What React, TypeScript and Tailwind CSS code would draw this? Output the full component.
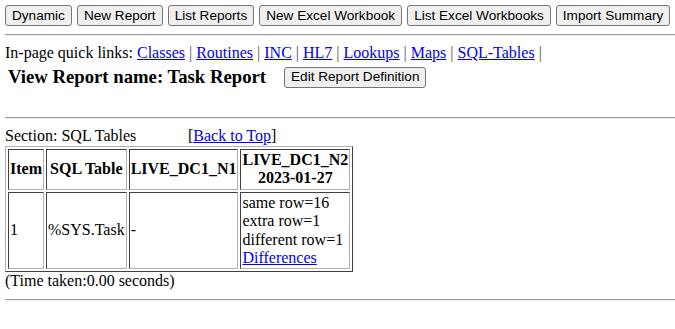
const navButtons = [
  "Dynamic",
  "New Report",
  "List Reports",
  "New Excel Workbook",
  "List Excel Workbooks",
  "Import Summary",
];

const quickLinks = ["Classes", "Routines", "INC", "HL7", "Lookups", "Maps", "SQL-Tables"];

const cell = "p-px border border-t-[#404040] border-l-[#404040] border-r-[#b0b0b0] border-b-[#b0b0b0]";

const Btn: React.FC<{ label: string }> = ({ label }) => (
  <button className="shrink-0 whitespace-nowrap h-[21px] px-[6px] border border-[#767676] rounded-[3px] bg-[#efefef] text-[13.6px] leading-none text-black font-['Liberation_Sans',Arial,sans-serif]">
    {label}
  </button>
);

const Rule = () => <div className="h-[2px] border-t border-b border-t-[#9a9a9a] border-b-[#eeeeee]" />;

const App: React.FC = () => {
  return (
    <div className="pl-[5px] pt-[5px] w-[675px] text-[16px] leading-[18.4px] text-black bg-white font-['Liberation_Serif','Times_New_Roman',serif]">
      <div className="flex gap-[5px]">
        {navButtons.map((b) => (
          <Btn key={b} label={b} />
        ))}
      </div>
      <div className="mt-[8px]">
        <Rule />
      </div>
      <div className="mt-[8px] h-[18px] whitespace-nowrap">
        In-page quick links:{" "}
        {quickLinks.map((l) => (
          <span key={l}>
            <a href="#" className="text-[#0000ee] underline">
              {l}
            </a>{" "}
            <span className="text-[#555]">|</span>{" "}
          </span>
        ))}
      </div>
      <div className="flex items-center mt-[4px] pl-[3px]">
        <h3 className="text-[18.72px] font-bold leading-[22px]">View Report name: Task Report</h3>
        <div className="ml-[18px]">
          <Btn label="Edit Report Definition" />
        </div>
      </div>
      <div className="mt-[29px]">
        <Rule />
      </div>
      <div className="mt-[8px] h-[19px] flex whitespace-nowrap">
        <span className="w-[183px]">Section: SQL Tables</span>
        <span>
          [<a href="#" className="text-[#0000ee] underline">Back to Top</a>]
        </span>
      </div>
      <table className="border-separate border-spacing-[2px] border border-t-[#b0b0b0] border-l-[#b0b0b0] border-r-[#404040] border-b-[#404040]">
        <thead>
          <tr>
            {["Item", "SQL Table", "LIVE_DC1_N1"].map((h) => (
              <th key={h} className={`${cell} font-bold whitespace-nowrap`}>
                {h}
              </th>
            ))}
            <th className={`${cell} font-bold whitespace-nowrap`}>
              LIVE_DC1_N2
              <br />
              2023-01-27
            </th>
          </tr>
        </thead>
        <tbody>
          <tr>
            <td className={cell}>1</td>
            <td className={cell}>%SYS.Task</td>
            <td className={cell}>-</td>
            <td className={`${cell} whitespace-nowrap`}>
              same row=16
              <br />
              extra row=1
              <br />
              different row=1
              <br />
              <a href="#" className="text-[#0000ee] underline">Differences</a>
            </td>
          </tr>
        </tbody>
      </table>
      <div className="h-[19px]">(Time taken:0.00 seconds)</div>
      <div className="mt-[8px]">
        <Rule />
      </div>
    </div>
  );
};

export default App;
